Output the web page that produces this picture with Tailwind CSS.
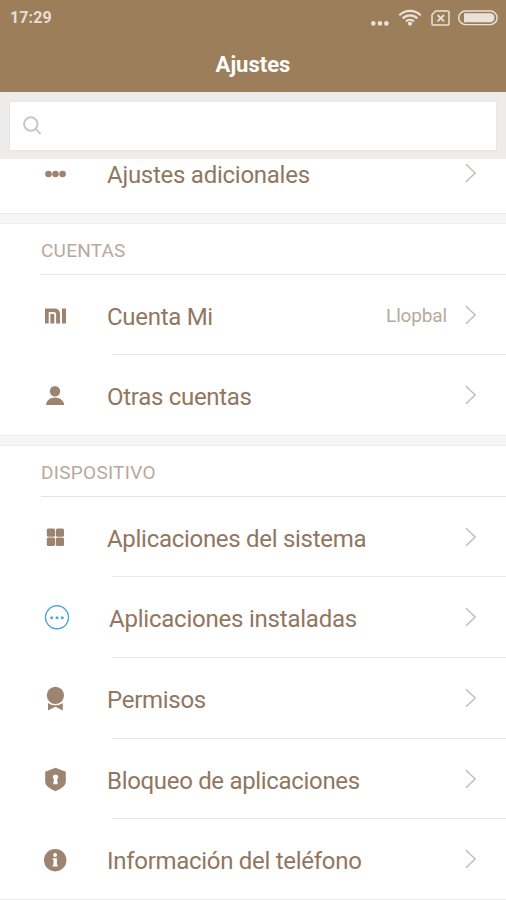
<!DOCTYPE html>
<html lang="es">
<head>
<meta charset="utf-8">
<title>Ajustes</title>
<script src="https://cdn.jsdelivr.net/npm/@tailwindcss/browser@4"></script>
</head>
<body class="w-[506px] h-[900px] overflow-hidden bg-white text-[#917660] font-['Roboto',sans-serif]">
<svg class="hidden"><symbol id="chev" viewBox="0 0 12 20"><path d="M1 1.2 10.2 10 1 18.8" fill="none" stroke="#c5bab1" stroke-width="1.4"/></symbol></svg>
<div class="flex flex-col h-[900px] overflow-hidden">
<header class="h-[92px] shrink-0 bg-[#9d7e5b] flex flex-col">
  <div class="h-[36px] flex items-center justify-between pl-[10px] pr-[8px] text-[#e6ded5]">
    <span class="text-[16px] leading-[20px] font-bold tracking-[0.1px]">17:29</span>
    <svg width="128" height="20" viewBox="370 8 128 20" fill="none" stroke="#e9e2da">
      <g fill="#e9e2da" stroke="none"><circle cx="373.3" cy="23.4" r="2.3"/><circle cx="379.9" cy="23.4" r="2.3"/><circle cx="386.4" cy="23.4" r="2.3"/><circle cx="410" cy="23.6" r="2.1"/></g>
      <g stroke-width="2.2"><path d="M399.3 15.2a15.2 15.2 0 0 1 21.4 0"/><path d="M402.7 18.4a10.4 10.4 0 0 1 14.6 0"/><path d="M405.9 21.4a5.9 5.9 0 0 1 8.2 0"/></g>
      <path stroke-width="1.5" d="M435.7 11h12.3a1 1 0 0 1 1 1v12a1 1 0 0 1-1 1h-15a1 1 0 0 1-1-1v-9.300z"/>
      <path stroke-width="1.8" d="m437.600 15 6.400 6.400m0-6.400-6.400 6.400"/>
      <rect x="458.700" y="11" width="38.400" height="13.600" rx="6.800" stroke-width="1.400"/>
      <path d="M464 13.300h26a4.500 4.500 0 0 1 0 9h-26z" fill="#e9e2da" stroke="none"/>
    </svg>
  </div>
  <h1 class="text-center text-white font-bold text-[22px] leading-[28px] mt-[15px]">Ajustes</h1>
</header>
<div class="h-[67px] shrink-0 bg-[#edecea] px-[9px] pt-[9px]">
  <div class="h-[50px] bg-white flex items-center pl-[13px] border border-[#e8e6e3]">
    <svg width="19" height="20" viewBox="0 0 19 20" fill="none" stroke="#cfc6be" stroke-width="2"><circle cx="7.800" cy="8" r="6.700"/><path d="m12.600 12.900 5 5.200"/></svg>
  </div>
</div>
<main>
  <div class="h-[54px] flex pr-[29px]">
    <svg class="ml-[41px] mr-[38px] mt-px" width="28" height="28" viewBox="0 0 28 28" fill="#9d8470"><circle cx="7.500" cy="14" r="3.300"/><circle cx="14.500" cy="14" r="3.300"/><circle cx="21.600" cy="14" r="3.300"/></svg>
    <span class="grow text-[24px] leading-[32px] tracking-[-0.26px]">Ajustes adicionales</span>
    <svg class="mt-[4px]" width="12" height="20"><use href="#chev"/></svg>
  </div>
  <div class="h-[11px] bg-[#f6f6f6] border-y border-[#ececec]"></div>

  <h2 class="h-[50px] pt-[14px] pl-[41px] text-[19px] leading-[26px] text-[#b8a99c] tracking-[0.22px]">CUENTAS</h2>
  <div class="h-px ml-[41px] bg-[#e4e4e4]"></div>
  <div class="h-[79px] flex items-center pr-[29px]">
    <svg class="ml-[41px] mr-[38px] mt-[2px]" width="28" height="28" viewBox="0 0 28 28" fill="#9d8470"><path d="M4 6.500h10a5 5 0 0 1 5 5v10h-3.900v-9.300a2.300 2.300 0 0 0-2.300-2.300H7.700v11.600H4zM9.400 12h3.900v9.500H9.400zM21 6.500h4v15h-4z"/></svg>
    <span class="grow text-[24px] leading-[32px] pt-[4px] tracking-[-0.29px]">Cuenta Mi</span>
    <span class="text-[19px] leading-[26px] text-[#b8a99c] mr-[18px] pt-[3px] tracking-[-0.15px]">Llopbal</span>
    <svg width="12" height="20"><use href="#chev"/></svg>
  </div>
  <div class="h-px ml-[112px] bg-[#e8e8e8]"></div>
  <div class="h-[80px] flex items-center pr-[29px]">
    <svg class="ml-[41px] mr-[38px] mt-[2px]" width="28" height="28" viewBox="0 0 28 28" fill="#9d8470"><circle cx="14" cy="9.200" r="5.200"/><path d="M5 23c.3-4.800 4.600-7.500 9-7.500s8.800 2.700 9.200 7.500z"/></svg>
    <span class="grow text-[24px] leading-[32px] pt-[3px] tracking-[-0.29px]">Otras cuentas</span>
    <svg width="12" height="20"><use href="#chev"/></svg>
  </div>
  <div class="h-[11px] bg-[#f6f6f6] border-y border-[#ececec]"></div>

  <h2 class="h-[50px] pt-[14px] pl-[41px] text-[19px] leading-[26px] text-[#b8a99c] tracking-[0.28px]">DISPOSITIVO</h2>
  <div class="h-px ml-[41px] bg-[#e4e4e4]"></div>
  <div class="h-[79px] flex items-center pr-[29px]">
    <svg class="ml-[41px] mr-[38px]" width="28" height="28" viewBox="0 0 28 28" fill="#9d8470"><rect x="5.800" y="5.500" width="8.200" height="8.200" rx="1.500"/><rect x="14.800" y="5.500" width="8.200" height="8.200" rx="1.500"/><rect x="5.800" y="14.500" width="8.200" height="8.400" rx="1.500"/><rect x="14.800" y="14.500" width="8.200" height="8.400" rx="1.500"/></svg>
    <span class="grow text-[24px] leading-[32px] pt-[4px] tracking-[-0.29px]">Aplicaciones del sistema</span>
    <svg width="12" height="20"><use href="#chev"/></svg>
  </div>
  <div class="h-px ml-[112px] bg-[#e8e8e8]"></div>
  <div class="h-[80px] flex items-center pr-[29px]">
    <svg class="ml-[43px] mr-[38px]" width="28" height="28" viewBox="0 0 28 28" fill="#4fa8d5"><circle cx="14" cy="14.300" r="11.500" fill="none" stroke="#4fa8d5" stroke-width="1.400"/><circle cx="8.700" cy="14.800" r="1.500"/><circle cx="14" cy="14.800" r="1.500"/><circle cx="19.300" cy="14.800" r="1.500"/></svg>
    <span class="grow text-[24px] leading-[32px] pt-[3px] tracking-[-0.22px]">Aplicaciones instaladas</span>
    <svg width="12" height="20"><use href="#chev"/></svg>
  </div>
  <div class="h-px ml-[112px] bg-[#e8e8e8]"></div>
  <div class="h-[80px] flex items-center pr-[29px]">
    <svg class="ml-[41px] mr-[38px]" width="28" height="28" viewBox="0 0 28 28" fill="#9d8470"><circle cx="14.400" cy="11.300" r="8.600"/><path d="M7 18.800c4.500 3 10.300 3 14.800 0v7.600l-7.400-3.600L7 26.400z"/><path d="M6 17.600c5 4.300 11.800 4.300 16.800 0" fill="none" stroke="#fff" stroke-width="1"/></svg>
    <span class="grow text-[24px] leading-[32px] pt-[3px] tracking-[-0.29px]">Permisos</span>
    <svg width="12" height="20"><use href="#chev"/></svg>
  </div>
  <div class="h-px ml-[112px] bg-[#e8e8e8]"></div>
  <div class="h-[79px] flex items-center pr-[29px]">
    <svg class="ml-[41px] mr-[38px] mt-px" width="28" height="28" viewBox="0 0 28 28" fill="#9d8470"><path d="M14.500 2.800 24.800 6.800v9.900c0 4.300-5.300 7.200-10.300 9.500C9.500 23.900 4.200 21 4.200 16.700V6.800z"/><path fill="#fff" d="M14.500 9.400a2.700 2.700 0 0 1 1.600 4.900l.7 5h-4.600l.7-5a2.700 2.700 0 0 1 1.600-4.900z"/></svg>
    <span class="grow text-[24px] leading-[32px] pt-[4px] tracking-[-0.32px]">Bloqueo de aplicaciones</span>
    <svg width="12" height="20"><use href="#chev"/></svg>
  </div>
  <div class="h-px ml-[112px] bg-[#e8e8e8]"></div>
  <div class="h-[80px] flex items-center pr-[29px]">
    <svg class="ml-[41px] mr-[38px] mt-px" width="28" height="28" viewBox="0 0 28 28" fill="#9d8470"><circle cx="14.200" cy="14.200" r="11.200"/><g fill="#fff"><circle cx="14.100" cy="9" r="1.900"/><path d="M11.800 12.200h4.100v6.600h.8v1.800h-5v-1.800h.8V14h-.7z"/></g></svg>
    <span class="grow text-[24px] leading-[32px] pt-[3px] tracking-[-0.29px]">Información del teléfono</span>
    <svg width="12" height="20"><use href="#chev"/></svg>
  </div>
  <div class="h-px bg-[#ececec]"></div>
</main>
</div>
</body>
</html>
